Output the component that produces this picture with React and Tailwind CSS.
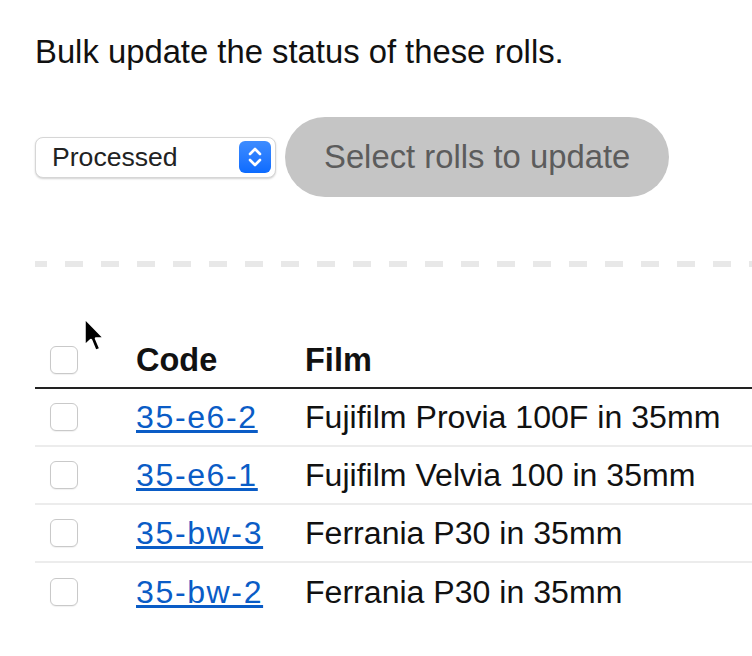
import { useState } from 'react'

const rolls = [
  { code: '35-e6-2', film: 'Fujifilm Provia 100F in 35mm' },
  { code: '35-e6-1', film: 'Fujifilm Velvia 100 in 35mm' },
  { code: '35-bw-3', film: 'Ferrania P30 in 35mm' },
  { code: '35-bw-2', film: 'Ferrania P30 in 35mm' },
]

function Checkbox() {
  return (
    <input
      type="checkbox"
      className="appearance-none block w-[28px] h-[28px] m-0 rounded-[6px] border-[1.5px] border-[#c9c9c9] bg-white shadow-[0_1px_1px_rgba(0,0,0,0.06)]"
    />
  )
}

function Stepper() {
  return (
    <div className="w-[32px] h-[32px] rounded-[6px] bg-gradient-to-b from-[#3d8cff] to-[#0b6bff] flex items-center justify-center">
      <svg width="16" height="22" viewBox="0 0 16 22" fill="none" stroke="white" strokeWidth="2.6" strokeLinecap="round" strokeLinejoin="round">
        <path d="M3 8 L8 3 L13 8" />
        <path d="M3 14 L8 19 L13 14" />
      </svg>
    </div>
  )
}

function Cursor() {
  return (
    <svg
      className="absolute left-[82px] top-[315px]"
      width="26"
      height="42"
      viewBox="0 0 26 42"
    >
      <path
        d="M2.5 3 L2.5 31 L9 25 L13.5 36 L18.5 34 L14 23.5 L22.5 23.5 Z"
        fill="black"
        stroke="white"
        strokeWidth="2.5"
        strokeLinejoin="round"
      />
    </svg>
  )
}

export default function App() {
  const [status] = useState('Processed')

  return (
    <div className="relative min-h-[656px] bg-white overflow-hidden pl-[35px] pt-[28px] text-[32.1px] text-[#111] font-['Liberation_Sans',Arial,sans-serif]">
      <p className="m-0 text-[32.8px] leading-[48px]">Bulk update the status of these rolls.</p>

      {/* Bulk controls */}
      <div className="mt-[41px] flex items-center gap-[9px]">
        <div className="w-[241px] h-[41px] rounded-[8px] bg-white border border-[#d6d6d6] shadow-[0_1px_2px_rgba(0,0,0,0.18)] flex items-center justify-between pl-[16px] pr-[4px]">
          <span className="text-[26.6px] text-[#222] leading-none">{status}</span>
          <Stepper />
        </div>
        <button
          disabled
          className="h-[80px] px-[39px] rounded-full bg-[#c5c5c5] text-[#5c5c5c] text-[32.8px] leading-none"
        >
          Select rolls to update
        </button>
      </div>

      <div className="mt-[64px] h-[6px] bg-[repeating-linear-gradient(90deg,#e8e8e8_0px,#e8e8e8_12px,transparent_12px,transparent_30px,#e8e8e8_30px,#e8e8e8_36px)]" />

      {/* Rolls table */}
      <table className="mt-[57px] w-full border-collapse">
        <thead>
          <tr className="border-b-2 border-[#222]">
            <th className="w-[101px] h-[64px] p-0 pl-[15px] pb-[9px] align-bottom">
              <div className="h-[36px] flex items-center">
                <Checkbox />
              </div>
            </th>
            <th className="w-[169px] p-0 pb-[9px] align-bottom text-left font-bold text-[32.5px] leading-[36px]">Code</th>
            <th className="p-0 pb-[9px] align-bottom text-left font-bold text-[32.5px] leading-[36px]">Film</th>
          </tr>
        </thead>
        <tbody>
          {rolls.map((roll, i) => (
            <tr key={roll.code} className={i < rolls.length - 1 ? 'border-b-2 border-[#ececec]' : ''}>
              <td className="h-[58px] p-0 pl-[15px] align-middle">
                <Checkbox />
              </td>
              <td className="p-0 align-middle leading-[36px]">
                <a href="#" className="text-[#0a5cc6] underline tracking-[1.6px]">{roll.code}</a>
              </td>
              <td className="p-0 align-middle leading-[36px] whitespace-nowrap">{roll.film}</td>
            </tr>
          ))}
        </tbody>
      </table>

      <Cursor />
    </div>
  )
}
